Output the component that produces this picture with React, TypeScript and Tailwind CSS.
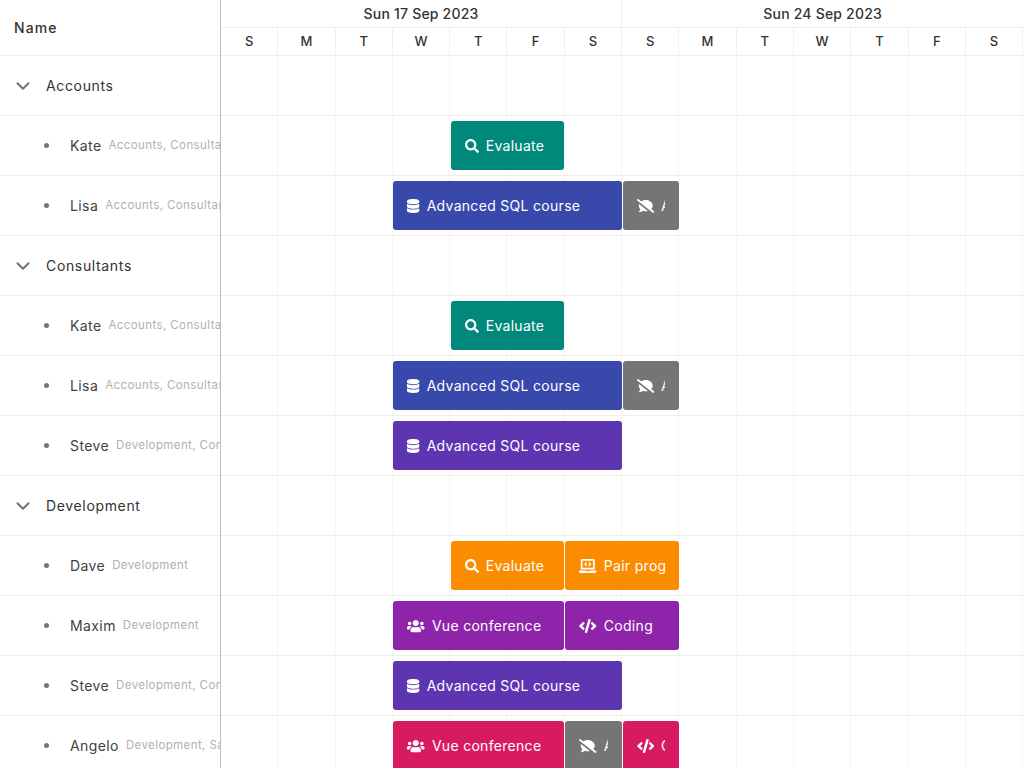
import React from 'react';
import { ChevronDown } from 'lucide-react';
import { FaSearch, FaDatabase, FaCommentSlash, FaLaptopCode, FaUsers, FaCode } from 'react-icons/fa';

type Task = {
  place: string;
  color: string;
  icon: React.ComponentType<{ className?: string }>;
  iconSize: string;
  label: string;
};
type Row = { name: string; sub?: string; tasks?: Task[] };

const days = ['S', 'M', 'T', 'W', 'T', 'F', 'S', 'S', 'M', 'T', 'W', 'T', 'F', 'S'];

const wide = 'w-[17.5px] h-[14px]';

const evaluate = (color: string): Task => ({
  place: 'col-start-5 col-span-2',
  color,
  icon: FaSearch,
  iconSize: 'w-[14px] h-[14px]',
  label: 'Evaluate',
});
const sql = (color: string): Task => ({
  place: 'col-start-4 col-span-4',
  color,
  icon: FaDatabase,
  iconSize: 'w-[12.25px] h-[14px]',
  label: 'Advanced SQL course',
});
const off: Task = { place: 'col-start-8 col-span-1', color: 'bg-[#757575]', icon: FaCommentSlash, iconSize: wide, label: 'Advanced' };

const rows: Row[] = [
  { name: 'Accounts' },
  { name: 'Kate', sub: 'Accounts, Consultants', tasks: [evaluate('bg-[#00897b]')] },
  { name: 'Lisa', sub: 'Accounts, Consultants', tasks: [sql('bg-[#3949ab]'), off] },
  { name: 'Consultants' },
  { name: 'Kate', sub: 'Accounts, Consultants', tasks: [evaluate('bg-[#00897b]')] },
  { name: 'Lisa', sub: 'Accounts, Consultants', tasks: [sql('bg-[#3949ab]'), off] },
  { name: 'Steve', sub: 'Development, Consultants', tasks: [sql('bg-[#5e35b1]')] },
  { name: 'Development' },
  {
    name: 'Dave',
    sub: 'Development',
    tasks: [
      evaluate('bg-[#fb8c00]'),
      { place: 'col-start-7 col-span-2', color: 'bg-[#fb8c00]', icon: FaLaptopCode, iconSize: wide, label: 'Pair programming' },
    ],
  },
  {
    name: 'Maxim',
    sub: 'Development',
    tasks: [
      { place: 'col-start-4 col-span-3', color: 'bg-[#8e24aa]', icon: FaUsers, iconSize: wide, label: 'Vue conference' },
      { place: 'col-start-7 col-span-2', color: 'bg-[#8e24aa]', icon: FaCode, iconSize: wide, label: 'Coding' },
    ],
  },
  { name: 'Steve', sub: 'Development, Consultants', tasks: [sql('bg-[#5e35b1]')] },
  {
    name: 'Angelo',
    sub: 'Development, Sales',
    tasks: [
      { place: 'col-start-4 col-span-3', color: 'bg-[#d81b60]', icon: FaUsers, iconSize: wide, label: 'Vue conference' },
      { place: 'col-start-7 col-span-1', color: 'bg-[#757575]', icon: FaCommentSlash, iconSize: wide, label: 'Advanced' },
      { place: 'col-start-8 col-span-1', color: 'bg-[#d81b60]', icon: FaCode, iconSize: wide, label: 'Coding' },
    ],
  },
];

const Bar: React.FC<{ task: Task }> = ({ task }) => {
  const Icon = task.icon;
  return (
    <div className={`${task.place} row-start-1 mx-[0.5px] min-w-0 rounded-[3px] ${task.color} px-[14px] flex items-center text-white`}>
      <div className="flex items-center gap-[7px] overflow-hidden whitespace-nowrap w-full">
        <Icon className={`${task.iconSize} shrink-0`} />
        <span className="text-[14px] tracking-[0.3px]">{task.label}</span>
      </div>
    </div>
  );
};

export default function App() {
  return (
    <div className="flex h-screen overflow-hidden bg-white text-[#333] font-['Inter','Liberation_Sans',sans-serif]">
      {/* names */}
      <div className="w-[221px] shrink-0 border-r border-[#bdbdbd]">
        <div className="h-[56px] border-b border-[#eeeeee] pl-[14px] flex items-center text-[14px] font-medium tracking-[1.1px]">
          Name
        </div>
        {rows.map((row, i) => (
          <div key={i} className="h-[60px] border-b border-[#eeeeee] flex items-center overflow-hidden whitespace-nowrap">
            {row.sub ? (
              <>
                <span className="ml-[44px] w-[5px] h-[5px] rounded-full bg-[#757575] shrink-0" />
                <span className="ml-[21px] text-[14px] text-[#424242] tracking-[0.4px]">{row.name}</span>
                <span className="ml-[7px] text-[11.5px] text-[#b0b0b0] tracking-[0.4px]">{row.sub}</span>
              </>
            ) : (
              <>
                <ChevronDown className="ml-[12px] w-[22px] h-[22px] text-[#757575] shrink-0" strokeWidth={2.25} />
                <span className="ml-[12px] text-[14px] text-[#333] tracking-[0.65px]">{row.name}</span>
              </>
            )}
          </div>
        ))}
      </div>

      {/* timeline */}
      <div className="flex-1 min-w-0">
        <div className="grid grid-cols-[repeat(2,401.1px)] h-[28px] border-b border-[#eeeeee] text-[14px] font-medium tracking-[0.2px]">
          <div className="border-r border-[#eeeeee] flex items-center justify-center">Sun 17 Sep 2023</div>
          <div className="flex items-center justify-center">Sun 24 Sep 2023</div>
        </div>
        <div className="grid grid-cols-[repeat(14,57.3px)] h-[28px] border-b border-[#eeeeee] text-[13px] font-medium">
          {days.map((d, i) => (
            <div key={i} className="border-r border-[#f0f0f0] flex items-center justify-center">{d}</div>
          ))}
        </div>
        {rows.map((row, i) => (
          <div key={i} className="relative h-[60px] border-b border-[#eeeeee]">
            <div className="absolute inset-0 grid grid-cols-[repeat(14,57.3px)]">
              {days.map((_, j) => (
                <div key={j} className="border-r border-[#f6f6f6]" />
              ))}
            </div>
            <div className="relative h-full py-[5px] grid grid-cols-[repeat(14,57.3px)] grid-rows-1">
              {row.tasks?.map((task, j) => <Bar key={j} task={task} />)}
            </div>
          </div>
        ))}
      </div>
    </div>
  );
}
